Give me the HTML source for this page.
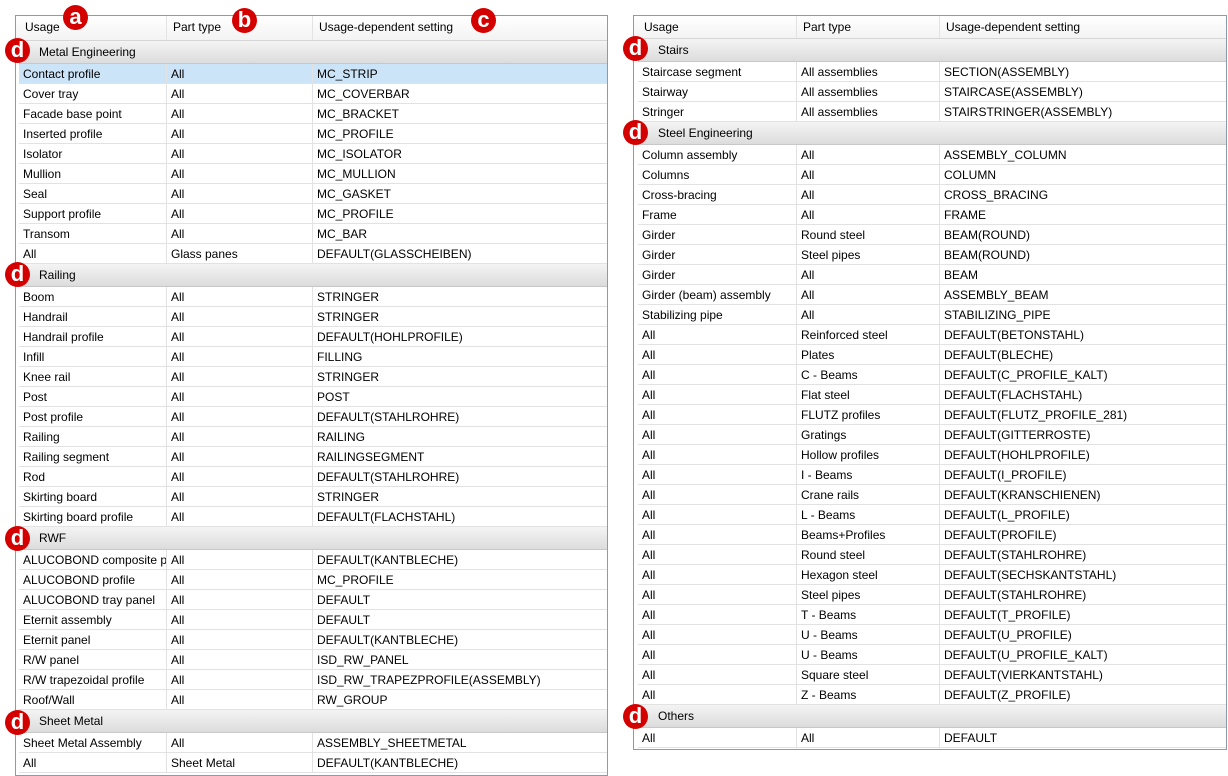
<!DOCTYPE html>
<html><head><meta charset="utf-8"><style>
*{margin:0;padding:0;box-sizing:border-box}
body{width:1228px;height:776px;background:#fff;position:relative;overflow:hidden;font-family:"Liberation Sans",sans-serif;font-size:12px;color:#000}
.t{position:absolute;border:1px solid #8a9bb0;background:#fff}
.h{height:23px;background:linear-gradient(#fff,#f3f3f3);border-bottom:1px solid #d5d5d5;display:flex}
.h div{line-height:22px;padding-left:6px;border-right:1px solid #e3e3e3}
.g{height:23px;line-height:22px;background:linear-gradient(#f4f4f4,#dcdcdc);border-bottom:1px solid #c8c8c8;padding-left:20px}
.r{height:20px;display:flex;border-bottom:1px solid #e2e2e2}
.r div{line-height:21px;height:19px;padding-left:4px;border-right:1px solid #e2e2e2;white-space:nowrap;overflow:hidden}
.sel{background:#cce4f7}
.b{position:absolute;width:25px;height:25px;border-radius:50%;background:#d40000;color:#fff;font-weight:bold;font-size:22px;line-height:23px;text-align:center;font-family:"Liberation Sans",sans-serif}
</style></head><body>

<div class="t" style="left:15px;top:15px;width:593px;height:761px">
<div class="h" style="padding-left:3px;height:25px"><div style="width:148px;line-height:23px">Usage</div><div style="width:146px;line-height:23px">Part type</div><div style="flex:1;border:0;line-height:23px">Usage-dependent setting</div></div>
<div style="padding-left:3px" id="L"></div>
</div>

<div class="t" style="left:633px;top:15px;width:594px;height:735px">
<div class="h" style="padding-left:4px"><div style="width:159px">Usage</div><div style="width:143px">Part type</div><div style="flex:1;border:0">Usage-dependent setting</div></div>
<div style="padding-left:4px" id="R"></div>
</div>

<script>
function rows(list,w){var s='';list.forEach(function(x){if(typeof x==='string'){s+='<div class="g">'+x+'</div>';}else{s+='<div class="r'+(x[3]?' sel':'')+'"><div style="width:'+w[0]+'px">'+x[0]+'</div><div style="width:'+w[1]+'px">'+x[1]+'</div><div style="flex:1;border:0">'+x[2]+'</div></div>';}});return s;}
var L=["Metal Engineering",["Contact profile","All","MC_STRIP",1],["Cover tray","All","MC_COVERBAR"],["Facade base point","All","MC_BRACKET"],["Inserted profile","All","MC_PROFILE"],["Isolator","All","MC_ISOLATOR"],["Mullion","All","MC_MULLION"],["Seal","All","MC_GASKET"],["Support profile","All","MC_PROFILE"],["Transom","All","MC_BAR"],["All","Glass panes","DEFAULT(GLASSCHEIBEN)"],
"Railing",["Boom","All","STRINGER"],["Handrail","All","STRINGER"],["Handrail profile","All","DEFAULT(HOHLPROFILE)"],["Infill","All","FILLING"],["Knee rail","All","STRINGER"],["Post","All","POST"],["Post profile","All","DEFAULT(STAHLROHRE)"],["Railing","All","RAILING"],["Railing segment","All","RAILINGSEGMENT"],["Rod","All","DEFAULT(STAHLROHRE)"],["Skirting board","All","STRINGER"],["Skirting board profile","All","DEFAULT(FLACHSTAHL)"],
"RWF",["ALUCOBOND composite panel","All","DEFAULT(KANTBLECHE)"],["ALUCOBOND profile","All","MC_PROFILE"],["ALUCOBOND tray panel","All","DEFAULT"],["Eternit assembly","All","DEFAULT"],["Eternit panel","All","DEFAULT(KANTBLECHE)"],["R/W panel","All","ISD_RW_PANEL"],["R/W trapezoidal profile","All","ISD_RW_TRAPEZPROFILE(ASSEMBLY)"],["Roof/Wall","All","RW_GROUP"],
"Sheet Metal",["Sheet Metal Assembly","All","ASSEMBLY_SHEETMETAL"],["All","Sheet Metal","DEFAULT(KANTBLECHE)"]];
document.getElementById('L').innerHTML=rows(L,[148,146]);
var R=["Stairs",["Staircase segment","All assemblies","SECTION(ASSEMBLY)"],["Stairway","All assemblies","STAIRCASE(ASSEMBLY)"],["Stringer","All assemblies","STAIRSTRINGER(ASSEMBLY)"],
"Steel Engineering",["Column assembly","All","ASSEMBLY_COLUMN"],["Columns","All","COLUMN"],["Cross-bracing","All","CROSS_BRACING"],["Frame","All","FRAME"],["Girder","Round steel","BEAM(ROUND)"],["Girder","Steel pipes","BEAM(ROUND)"],["Girder","All","BEAM"],["Girder (beam) assembly","All","ASSEMBLY_BEAM"],["Stabilizing pipe","All","STABILIZING_PIPE"],["All","Reinforced steel","DEFAULT(BETONSTAHL)"],["All","Plates","DEFAULT(BLECHE)"],["All","C - Beams","DEFAULT(C_PROFILE_KALT)"],["All","Flat steel","DEFAULT(FLACHSTAHL)"],["All","FLUTZ profiles","DEFAULT(FLUTZ_PROFILE_281)"],["All","Gratings","DEFAULT(GITTERROSTE)"],["All","Hollow profiles","DEFAULT(HOHLPROFILE)"],["All","I - Beams","DEFAULT(I_PROFILE)"],["All","Crane rails","DEFAULT(KRANSCHIENEN)"],["All","L - Beams","DEFAULT(L_PROFILE)"],["All","Beams+Profiles","DEFAULT(PROFILE)"],["All","Round steel","DEFAULT(STAHLROHRE)"],["All","Hexagon steel","DEFAULT(SECHSKANTSTAHL)"],["All","Steel pipes","DEFAULT(STAHLROHRE)"],["All","T - Beams","DEFAULT(T_PROFILE)"],["All","U - Beams","DEFAULT(U_PROFILE)"],["All","U - Beams","DEFAULT(U_PROFILE_KALT)"],["All","Square steel","DEFAULT(VIERKANTSTAHL)"],["All","Z - Beams","DEFAULT(Z_PROFILE)"],
"Others",["All","All","DEFAULT"]];
document.getElementById('R').innerHTML=rows(R,[159,143]);
</script>

<div class="b" style="left:63px;top:5px">a</div>
<div class="b" style="left:232px;top:8px">b</div>
<div class="b" style="left:471px;top:8px">c</div>
<div class="b" style="left:5px;top:38px">d</div>
<div class="b" style="left:5px;top:262px">d</div>
<div class="b" style="left:5px;top:526px">d</div>
<div class="b" style="left:5px;top:710px">d</div>
<div class="b" style="left:623px;top:36px">d</div>
<div class="b" style="left:623px;top:120px">d</div>
<div class="b" style="left:623px;top:704px">d</div>
</body></html>
